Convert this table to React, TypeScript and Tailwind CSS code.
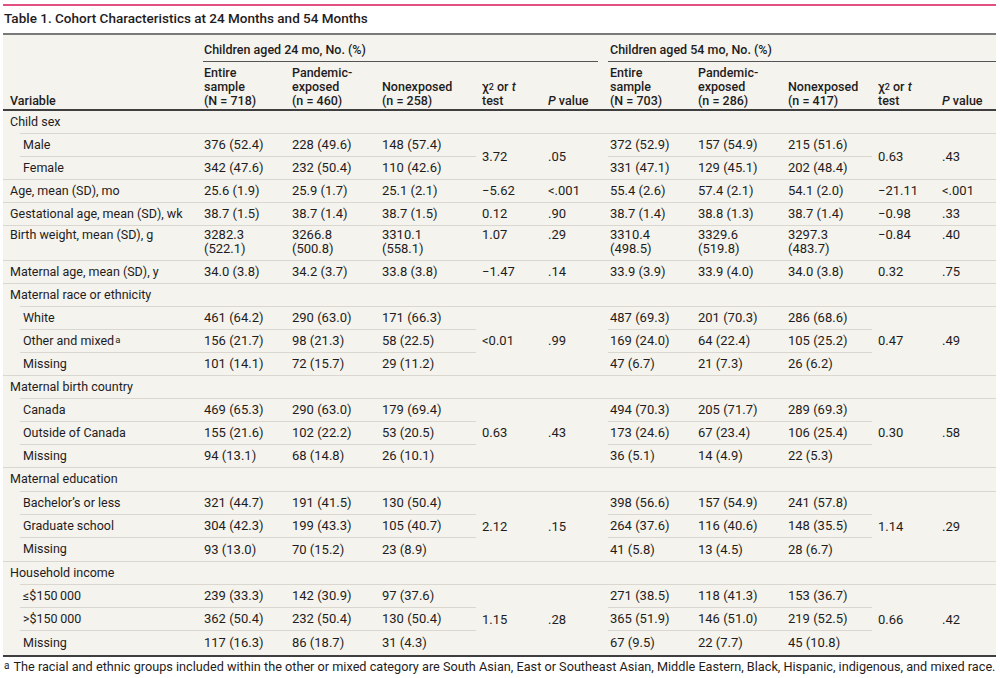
import React from "react";

const COLS =
  "grid grid-cols-[195px_88px_90px_100px_66px_62px_88px_90px_90px_64px_60px]";
const LINE = "border-[#d9d7cf]";
const NUM = "text-[13px]";

type SingleRow = { label: string; v: string[]; two?: boolean };
type SubRow = { label: React.ReactNode; v: string[] };
type Group = { label: string; rows: SubRow[]; stats: string[]; gridRows: string };

const singles1: SingleRow[] = [
  {
    label: "Age, mean (SD), mo",
    v: ["25.6 (1.9)", "25.9 (1.7)", "25.1 (2.1)", "\u22125.62", "<.001", "55.4 (2.6)", "57.4 (2.1)", "54.1 (2.0)", "\u221221.11", "<.001"],
  },
  {
    label: "Gestational age, mean (SD), wk",
    v: ["38.7 (1.5)", "38.7 (1.4)", "38.7 (1.5)", "0.12", ".90", "38.7 (1.4)", "38.8 (1.3)", "38.7 (1.4)", "\u22120.98", ".33"],
  },
  {
    label: "Birth weight, mean (SD), g",
    v: ["3282.3|(522.1)", "3266.8|(500.8)", "3310.1|(558.1)", "1.07", ".29", "3310.4|(498.5)", "3329.6|(519.8)", "3297.3|(483.7)", "\u22120.84", ".40"],
    two: true,
  },
  {
    label: "Maternal age, mean (SD), y",
    v: ["34.0 (3.8)", "34.2 (3.7)", "33.8 (3.8)", "\u22121.47", ".14", "33.9 (3.9)", "33.9 (4.0)", "34.0 (3.8)", "0.32", ".75"],
  },
];

const childSex: Group = {
  label: "Child sex",
  rows: [
    { label: "Male", v: ["376 (52.4)", "228 (49.6)", "148 (57.4)", "372 (52.9)", "157 (54.9)", "215 (51.6)"] },
    { label: "Female", v: ["342 (47.6)", "232 (50.4)", "110 (42.6)", "331 (47.1)", "129 (45.1)", "202 (48.4)"] },
  ],
  stats: ["3.72", ".05", "0.63", ".43"],
  gridRows: "grid-rows-[23px_23px_22px]",
};

const groups2: Group[] = [
  {
    label: "Maternal race or ethnicity",
    rows: [
      { label: "White", v: ["461 (64.2)", "290 (63.0)", "171 (66.3)", "487 (69.3)", "201 (70.3)", "286 (68.6)"] },
      {
        label: (
          <>
            Other and mixed<sup className="text-[9.5px] ml-[1px] relative -top-[1px]">a</sup>
          </>
        ),
        v: ["156 (21.7)", "98 (21.3)", "58 (22.5)", "169 (24.0)", "64 (22.4)", "105 (25.2)"],
      },
      { label: "Missing", v: ["101 (14.1)", "72 (15.7)", "29 (11.2)", "47 (6.7)", "21 (7.3)", "26 (6.2)"] },
    ],
    stats: ["<0.01", ".99", "0.47", ".49"],
    gridRows: "grid-rows-[23px_23px_23px_22px]",
  },
  {
    label: "Maternal birth country",
    rows: [
      { label: "Canada", v: ["469 (65.3)", "290 (63.0)", "179 (69.4)", "494 (70.3)", "205 (71.7)", "289 (69.3)"] },
      { label: "Outside of Canada", v: ["155 (21.6)", "102 (22.2)", "53 (20.5)", "173 (24.6)", "67 (23.4)", "106 (25.4)"] },
      { label: "Missing", v: ["94 (13.1)", "68 (14.8)", "26 (10.1)", "36 (5.1)", "14 (4.9)", "22 (5.3)"] },
    ],
    stats: ["0.63", ".43", "0.30", ".58"],
    gridRows: "grid-rows-[23px_23px_23px_22px]",
  },
  {
    label: "Maternal education",
    rows: [
      { label: "Bachelor\u2019s or less", v: ["321 (44.7)", "191 (41.5)", "130 (50.4)", "398 (56.6)", "157 (54.9)", "241 (57.8)"] },
      { label: "Graduate school", v: ["304 (42.3)", "199 (43.3)", "105 (40.7)", "264 (37.6)", "116 (40.6)", "148 (35.5)"] },
      { label: "Missing", v: ["93 (13.0)", "70 (15.2)", "23 (8.9)", "41 (5.8)", "13 (4.5)", "28 (6.7)"] },
    ],
    stats: ["2.12", ".15", "1.14", ".29"],
    gridRows: "grid-rows-[24px_23px_23px_23px]",
  },
  {
    label: "Household income",
    rows: [
      { label: "\u2264$150\u2009000", v: ["239 (33.3)", "142 (30.9)", "97 (37.6)", "271 (38.5)", "118 (41.3)", "153 (36.7)"] },
      { label: ">$150\u2009000", v: ["362 (50.4)", "232 (50.4)", "130 (50.4)", "365 (51.9)", "146 (51.0)", "219 (52.5)"] },
      { label: "Missing", v: ["117 (16.3)", "86 (18.7)", "31 (4.3)", "67 (9.5)", "22 (7.7)", "45 (10.8)"] },
    ],
    stats: ["1.15", ".28", "0.66", ".42"],
    gridRows: "grid-rows-[23px_23px_23px_24px]",
  },
];

const ROWSPAN: Record<number, string> = { 2: "row-span-2", 3: "row-span-3" };

function Single({ row }: { row: SingleRow }) {
  const cell = row.two
    ? "flex flex-col justify-start pt-[2px] leading-[14px]"
    : "flex items-center";
  return (
    <div className={`${COLS} ${row.two ? "grid-rows-[34px]" : "grid-rows-[22px]"} border-b ${LINE}`}>
      <div className={`${cell} pl-[7px]`}>{row.label}</div>
      {row.v.map((x, i) => (
        <div key={i} className={`${cell} ${NUM} pl-[6px]`}>
          {x.split("|").map((p, j) => (
            <span key={j}>{p}</span>
          ))}
        </div>
      ))}
    </div>
  );
}

function GroupBlock({ g, last }: { g: Group; last?: boolean }) {
  const n = g.rows.length;
  return (
    <div className={`${COLS} ${g.gridRows} ${last ? "" : `border-b ${LINE}`}`}>
      <div className={`col-span-11 ml-[17px] border-b ${LINE} flex items-center`}>
        <span className="-ml-[10px]">{g.label}</span>
      </div>
      {g.rows.map((r, i) => {
        const b = i < n - 1 ? `border-b ${LINE}` : "";
        return (
          <React.Fragment key={i}>
            <div className={`ml-[17px] pl-[3px] flex items-center ${b}`}>{r.label}</div>
            <div className={`pl-[6px] ${NUM} flex items-center ${b}`}>{r.v[0]}</div>
            <div className={`pl-[6px] ${NUM} flex items-center ${b}`}>{r.v[1]}</div>
            <div className={`pl-[6px] ${NUM} flex items-center ${b}`}>{r.v[2]}</div>
            {i === 0 && (
              <>
                <div className={`${ROWSPAN[n]} ${NUM} pl-[6px] flex items-center`}>{g.stats[0]}</div>
                <div className={`${ROWSPAN[n]} ${NUM} pl-[6px] flex items-center`}>{g.stats[1]}</div>
              </>
            )}
            <div className={`ml-[4px] pl-[2px] ${NUM} flex items-center ${b}`}>{r.v[3]}</div>
            <div className={`pl-[6px] ${NUM} flex items-center ${b}`}>{r.v[4]}</div>
            <div className={`pl-[6px] ${NUM} flex items-center ${b}`}>{r.v[5]}</div>
            {i === 0 && (
              <>
                <div className={`${ROWSPAN[n]} ${NUM} pl-[6px] flex items-center`}>{g.stats[2]}</div>
                <div className={`${ROWSPAN[n]} ${NUM} pl-[6px] flex items-center`}>{g.stats[3]}</div>
              </>
            )}
          </React.Fragment>
        );
      })}
    </div>
  );
}

function ColHead({ lines }: { lines: React.ReactNode[] }) {
  return (
    <div className="pl-[6px] flex flex-col justify-end pb-[1px] leading-[14px]">
      {lines.map((l, i) => (
        <span key={i}>{l}</span>
      ))}
    </div>
  );
}

const chi = (
  <>
    {"\u03c7"}
    <sup className="text-[9px] relative -top-[1px]">2</sup> or <i>t</i>
  </>
);
const pval = (
  <>
    <i>P</i> value
  </>
);

export default function App() {
  return (
    <div
      className="w-[1000px] h-[678px] bg-white text-[#1f1c1d] text-[12.5px] overflow-hidden"
      style={{ fontFamily: "Roboto, 'Liberation Sans', sans-serif" }}
    >
      <div className="pl-[3px] pr-[4px] pt-[4px]">
        <div className="h-[2px] bg-[#e2507f]" />
        <div className="h-[27px] flex items-center pl-[1px] pb-[2px] text-[13.5px] font-medium">
          Table 1. Cohort Characteristics at 24 Months and 54 Months
        </div>
        <div className="border-t-2 border-[#7a7a7a] border-b-2 border-b-[#3f3f3f] bg-[#f4f3ed]">
          {/* header */}
          <div className="border-b-2 border-[#3f3f3f] font-medium">
            <div className={`${COLS} grid-rows-[27px]`}>
              <div />
              <div className="col-span-5 ml-[5px] mr-[6px] border-b border-[#555] flex items-center pt-[4px] pl-[1px]">
                Children aged 24 mo, No. (%)
              </div>
              <div className="col-span-5 ml-[4px] border-b border-[#555] flex items-center pt-[4px] pl-[2px]">
                Children aged 54 mo, No. (%)
              </div>
            </div>
            <div className={`${COLS} grid-rows-[47px]`}>
              <div className="pl-[7px] flex flex-col justify-end pb-[1px] leading-[14px]">Variable</div>
              <ColHead lines={["Entire", "sample", "(N = 718)"]} />
              <ColHead lines={["Pandemic-", "exposed", "(n = 460)"]} />
              <ColHead lines={["Nonexposed", "(n = 258)"]} />
              <ColHead lines={[chi, "test"]} />
              <ColHead lines={[pval]} />
              <ColHead lines={["Entire", "sample", "(N = 703)"]} />
              <ColHead lines={["Pandemic-", "exposed", "(n = 286)"]} />
              <ColHead lines={["Nonexposed", "(n = 417)"]} />
              <ColHead lines={[chi, "test"]} />
              <ColHead lines={[pval]} />
            </div>
          </div>
          {/* body */}
          <GroupBlock g={childSex} />
          {singles1.map((r, i) => (
            <Single key={i} row={r} />
          ))}
          {groups2.map((g, i) => (
            <GroupBlock key={i} g={g} last={i === groups2.length - 1} />
          ))}
        </div>
        <div className="mt-[2px] leading-[16px] text-[12.7px] whitespace-nowrap pl-[1px]">
          <sup className="text-[10px] relative -top-[2px] mr-[4px]">a</sup>
          The racial and ethnic groups included within the other or mixed category are South Asian, East or
          Southeast Asian, Middle Eastern, Black, Hispanic, indigenous, and mixed race.
        </div>
      </div>
    </div>
  );
}
